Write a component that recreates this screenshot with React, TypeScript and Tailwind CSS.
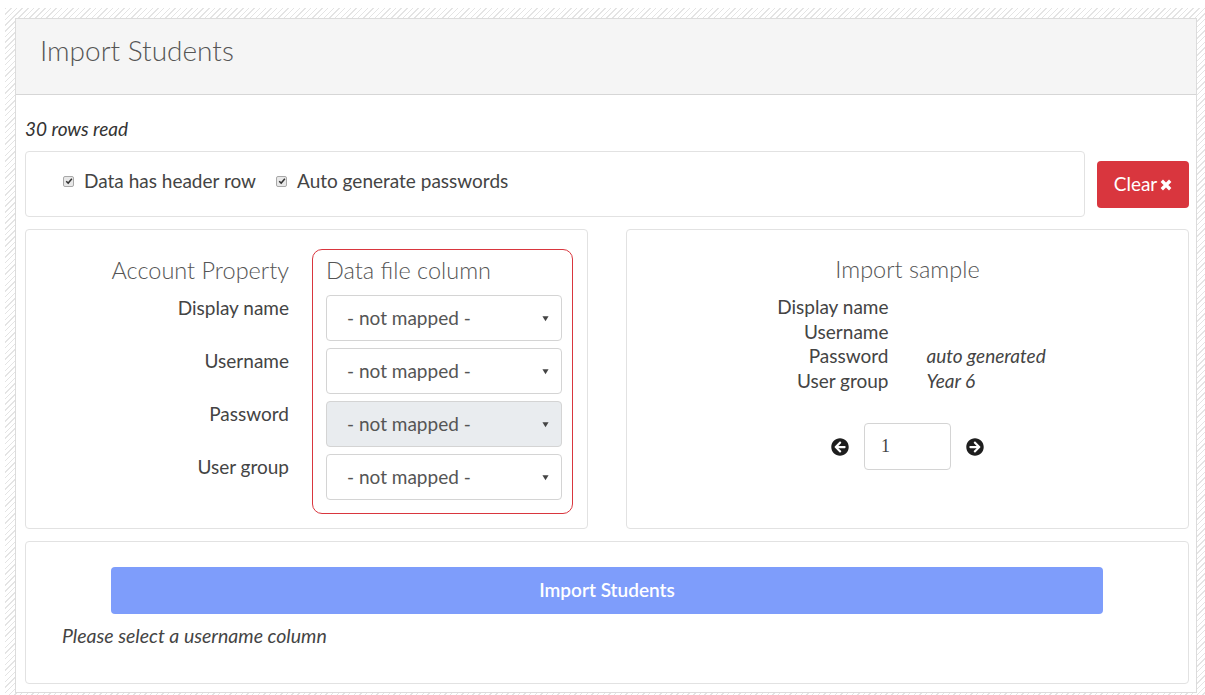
import { FaArrowCircleLeft, FaArrowCircleRight } from 'react-icons/fa'

const fields = ['Display name', 'Username', 'Password', 'User group']

const sample: { label: string; value?: string }[] = [
  { label: 'Display name' },
  { label: 'Username' },
  { label: 'Password', value: 'auto generated' },
  { label: 'User group', value: 'Year 6' },
]

function Checkbox() {
  return (
    <span className="inline-flex h-[11px] w-[11px] items-center justify-center rounded-[2px] border border-[#a8a8a8] bg-[#e8e8e8]">
      <svg viewBox="0 0 10 10" className="h-[8px] w-[8px]">
        <path d="M1.5 5.2 L4 7.6 L8.6 2.2" fill="none" stroke="#333" strokeWidth="1.8" />
      </svg>
    </span>
  )
}

function MappingSelect({ disabled }: { disabled?: boolean }) {
  return (
    <div
      className={`flex h-[46px] items-center justify-between rounded-[4px] border border-[#d4d4d4] pl-[20px] pr-[12px] text-[19px] text-[#555] ${
        disabled ? 'bg-[#e9ecef]' : 'bg-white'
      }`}
    >
      <span>- not mapped -</span>
      <svg viewBox="0 0 8 8" className="h-[7px] w-[7px]">
        <path d="M0.5 1.5 L7.5 1.5 L4 7 Z" fill="#444" />
      </svg>
    </div>
  )
}

export default function App() {
  return (
    <div className="min-h-screen bg-white pl-[5px] pt-[8px] font-['Lato','Liberation_Sans',sans-serif] text-[#444]">
      <div className="w-[1200px] bg-[repeating-linear-gradient(135deg,#e4e4e4_0px,#e4e4e4_1px,#ffffff_1px,#ffffff_4px)] pb-[3px] pl-[10px] pr-[8px] pt-[10px]">
        <div className="border border-[#dcdcdc] bg-white">
          <div className="flex h-[76px] items-center border-b border-[#d6d6d6] bg-[#f5f5f5] px-[24px] pb-[13px]">
            <h1 className="text-[28px] font-light text-[#555]">Import Students</h1>
          </div>

          <div className="pb-[8px] pl-[9px] pr-[7px] pt-[22px]">
            <p className="text-[19px] italic leading-[24px] text-[#333]">30 rows read</p>

            {/* options + clear */}
            <div className="mt-[10px] flex items-start gap-[12px]">
              <div className="flex h-[66px] flex-1 items-start gap-[20px] rounded-[4px] border border-[#e2e2e2] pl-[37px] pt-[17px] text-[19px] leading-[24px] text-[#444]">
                <label className="flex items-center gap-[10px]">
                  <Checkbox />
                  Data has header row
                </label>
                <label className="flex items-center gap-[10px]">
                  <Checkbox />
                  Auto generate passwords
                </label>
              </div>
              <button className="mt-[10px] flex h-[47px] w-[92px] items-center justify-center gap-[3px] rounded-[4px] bg-[#d9363e] text-[19px] text-white">
                Clear
                <svg viewBox="0 0 10 10" className="h-[12px] w-[12px]">
                  <path d="M1.5 1.5 L8.5 8.5 M8.5 1.5 L1.5 8.5" stroke="#fff" strokeWidth="2.8" />
                </svg>
              </button>
            </div>

            {/* mapping + sample */}
            <div className="mt-[12px] grid grid-cols-2 gap-[38px]">
              <div className="flex h-[300px] items-start gap-[23px] rounded-[4px] border border-[#e2e2e2] pt-[19px]">
                <div className="w-[263px] pt-[7px] text-right">
                  <div className="h-[28px] text-[23.5px] font-light leading-[28px] text-[#555]">Account Property</div>
                  <div className="mt-[12px]">
                    {fields.map((f) => (
                      <div key={f} className="h-[53px] text-[19px] leading-[24px] text-[#444]">
                        {f}
                      </div>
                    ))}
                  </div>
                </div>
                <div className="w-[261px] rounded-[10px] border-[1.5px] border-[#d9363e] pb-[13px] pl-[13px] pr-[10px] pt-[6px]">
                  <div className="h-[28px] text-[23.5px] font-light leading-[28px] text-[#555]">Data file column</div>
                  <div className="mt-[11px] flex flex-col gap-[7px]">
                    {fields.map((f) => (
                      <MappingSelect key={f} disabled={f === 'Password'} />
                    ))}
                  </div>
                </div>
              </div>

              <div className="h-[300px] rounded-[4px] border border-[#e2e2e2] pt-[25px]">
                <div className="text-center text-[23.5px] font-light leading-[28px] text-[#555]">Import sample</div>
                <div className="mt-[12px] grid grid-cols-2 text-[19px] leading-[24.6px]">
                  {sample.map((row) => (
                    <div key={row.label} className="contents">
                      <div className="pr-[19px] text-right text-[#444]">{row.label}</div>
                      <div className="pl-[19px] italic text-[#444]">{row.value ?? ''}</div>
                    </div>
                  ))}
                </div>
                <div className="mt-[30px] flex items-center justify-center gap-[15px]">
                  <FaArrowCircleLeft className="h-[18px] w-[18px] text-[#1e1e1e]" />
                  <div className="flex h-[47px] w-[87px] items-center rounded-[4px] border border-[#d4d4d4] pl-[16px] font-['Liberation_Serif',serif] text-[18px] text-[#444]">
                    1
                  </div>
                  <FaArrowCircleRight className="h-[18px] w-[18px] text-[#1e1e1e]" />
                </div>
              </div>
            </div>

            {/* import */}
            <div className="mt-[12px] h-[143px] rounded-[4px] border border-[#e2e2e2] pt-[25px]">
              <button className="mx-auto flex h-[47px] w-[992px] items-center justify-center rounded-[4px] bg-[#7e9dfb] text-[19px] font-semibold text-white">
                Import Students
              </button>
              <p className="mt-[10px] pl-[36px] text-[19.5px] italic leading-[24px] text-[#444]">Please select a username column</p>
            </div>
          </div>
        </div>
      </div>
    </div>
  )
}
